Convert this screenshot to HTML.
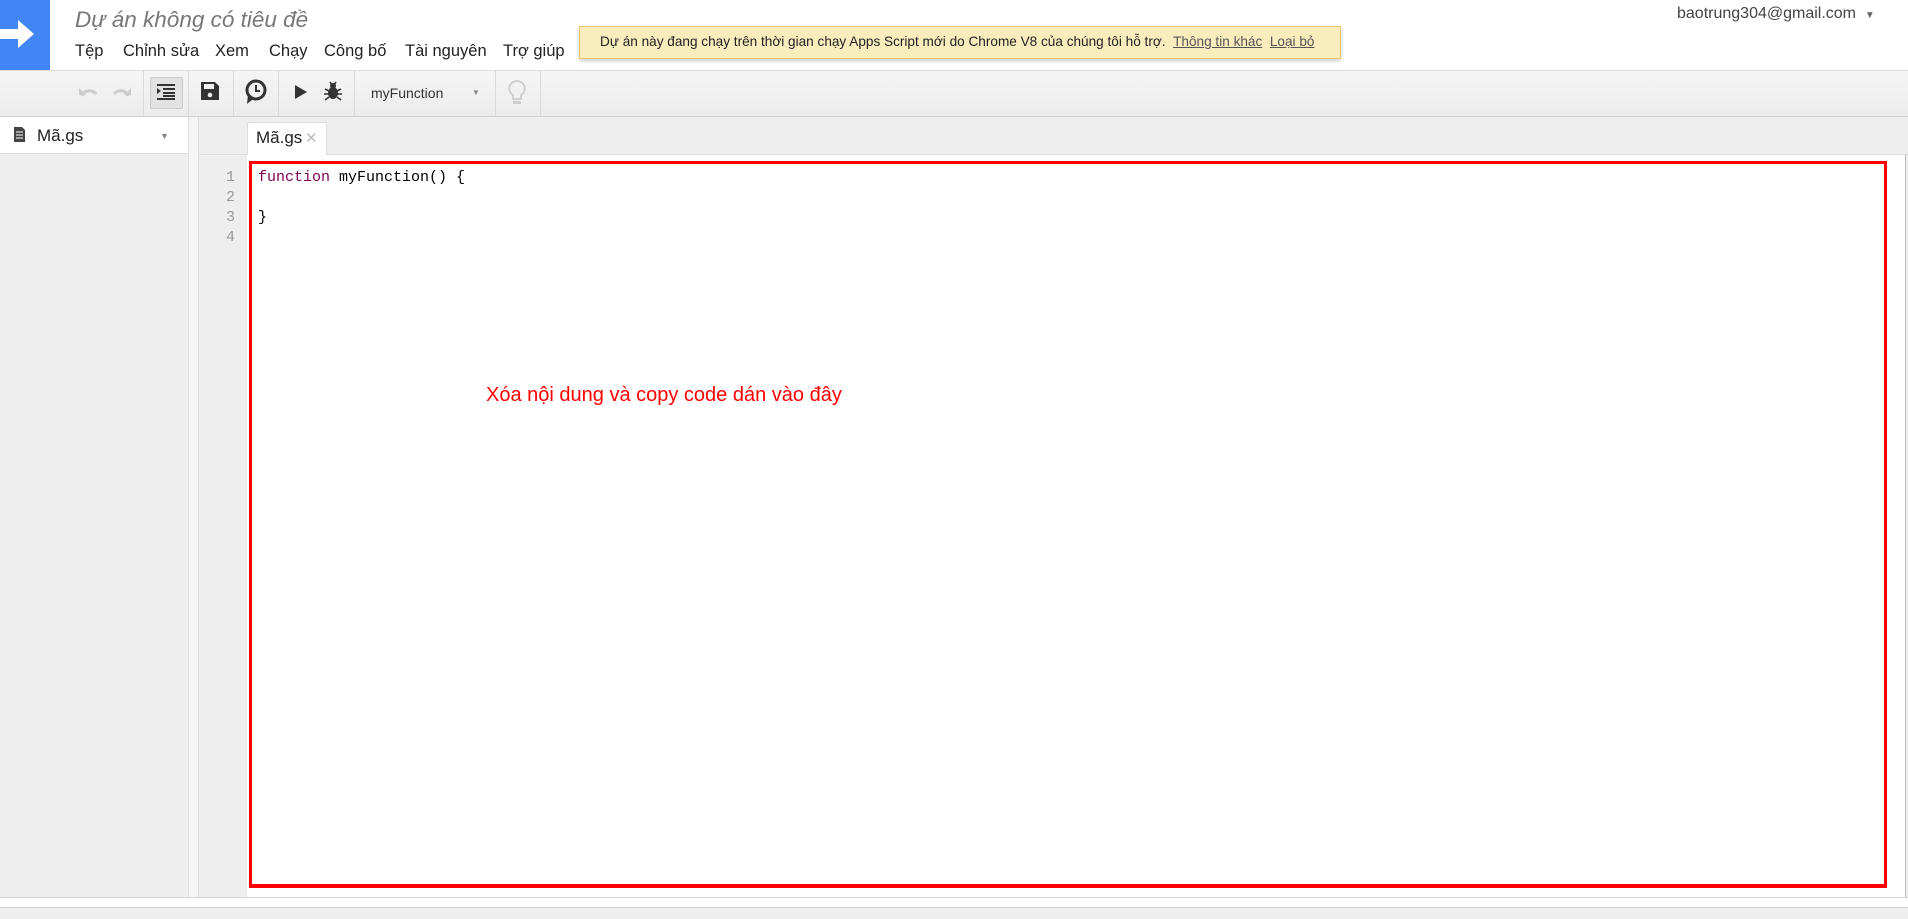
<!DOCTYPE html>
<html><head><meta charset="utf-8"><style>
*{margin:0;padding:0;box-sizing:border-box}
body{width:1908px;height:919px;overflow:hidden;background:#fff;font-family:"Liberation Sans","Noto Sans CJK SC",sans-serif;position:relative}
.a{position:absolute}
.menu span{position:absolute;top:42px;font-size:16.5px;color:#222}
.sep{position:absolute;top:71px;width:1px;height:45px;background:#d9d9d9}
.code{font-family:"Liberation Mono","DejaVu Sans Mono",monospace;font-size:15px;line-height:20px}
</style></head><body>
<div class="a" style="left:0;top:0;width:50px;height:70px;background:#4285f4"></div>
<svg class="a" style="left:0;top:16px" width="40" height="36" viewBox="0 0 40 36"><path d="M0 13h18V4l16 14-16 14v-9H0z" fill="#fff"/></svg>
<div class="a" style="left:75px;top:7px;font-size:22.5px;font-style:italic;color:#777">Dự án không có tiêu đề</div>
<div class="menu">
<span style="left:75px">Tệp</span><span style="left:123px">Chỉnh sửa</span><span style="left:215px">Xem</span><span style="left:269px">Chạy</span><span style="left:324px">Công bố</span><span style="left:405px">Tài nguyên</span><span style="left:503px">Trợ giúp</span></div>
<div class="a" style="left:579px;top:26px;width:762px;height:33px;background:#f9edbe;border:1px solid #f0c36d;box-shadow:0 2px 4px rgba(0,0,0,.2);font-size:13.6px;color:#222;padding:7px 0 0 20px;white-space:nowrap">Dự án này đang chạy trên thời gian chạy Apps Script mới do Chrome V8 của chúng tôi hỗ trợ. &nbsp;<u style="color:#555">Thông tin khác</u>&nbsp; <u style="color:#555">Loại bỏ</u></div>
<div class="a" style="left:1677px;top:5px;font-size:16px;color:#444">baotrung304@gmail.com &nbsp;<span style="font-size:10px;color:#666">▼</span></div>
<!-- toolbar -->
<div class="a" style="left:0;top:70px;width:1908px;height:47px;background:linear-gradient(#f5f5f5,#ececec);border-top:1px solid #ddd;border-bottom:1px solid #d0d0d0"></div>
<div class="sep" style="left:143px"></div><div class="sep" style="left:188px"></div><div class="sep" style="left:233px"></div><div class="sep" style="left:278px"></div><div class="sep" style="left:354px"></div><div class="sep" style="left:495px"></div><div class="sep" style="left:540px"></div>
<svg class="a" style="left:78px;top:84px" width="54" height="16"><path d="M4 12c2-6 10-7 14-2" stroke="#ccc" stroke-width="3" fill="none"/><path d="M1 4v7h7z" fill="#ccc"/><path d="M50 12c-2-6-10-7-14-2" stroke="#ccc" stroke-width="3" fill="none"/><path d="M53 4v7h-7z" fill="#ccc"/></svg>
<div class="a" style="left:150px;top:77px;width:33px;height:32px;background:#e2e2e2;border:1px solid #ccc;border-radius:2px"></div>
<svg class="a" style="left:157px;top:84px" width="18" height="16"><g fill="#333"><rect x="0" y="0" width="18" height="2"/><rect x="6" y="4" width="12" height="2"/><rect x="6" y="8" width="12" height="2"/><rect x="0" y="14" width="18" height="2"/><rect x="6" y="11" width="12" height="2"/><path d="M0 4l4 3-4 3z"/></g></svg>
<svg class="a" style="left:201px;top:82px" width="18" height="18"><path d="M0 0h14l4 4v14H0z" fill="#333"/><rect x="3" y="2" width="10" height="5" fill="#eee"/><circle cx="9" cy="13" r="2.3" fill="#eee"/></svg>
<svg class="a" style="left:244px;top:79px" width="24" height="26"><circle cx="12" cy="11" r="9" stroke="#333" stroke-width="3" fill="none"/><path d="M12 6v6h4" stroke="#333" stroke-width="2" fill="none"/><path d="M4 16l-1 9 6-5z" fill="#333"/></svg>
<svg class="a" style="left:294px;top:84px" width="14" height="16"><path d="M1 1l12 7-12 7z" fill="#333"/></svg>
<svg class="a" style="left:323px;top:81px" width="20" height="20"><ellipse cx="10" cy="12" rx="5" ry="6" fill="#333"/><circle cx="10" cy="5" r="3" fill="#333"/><path d="M2 8l4 2M18 8l-4 2M1 13h5M19 13h-5M2 19l4-3M18 19l-4-3M7 1l2 3M13 1l-2 3" stroke="#333" stroke-width="1.6"/></svg>
<div class="a" style="left:371px;top:85px;font-size:14px;color:#333">myFunction</div>
<div class="a" style="left:472px;top:88px;font-size:8px;color:#888">▼</div>
<svg class="a" style="left:507px;top:79px" width="20" height="28"><path d="M10 2a7.5 7.5 0 0 0-4 14v4h8v-4a7.5 7.5 0 0 0-4-14z" stroke="#ccc" stroke-width="1.8" fill="none"/><rect x="6" y="22" width="8" height="3" fill="#ccc"/></svg>
<!-- lower area -->
<div class="a" style="left:0;top:117px;width:1908px;height:780px;background:#eee"></div>
<div class="a" style="left:0;top:117px;width:188px;height:37px;background:#fff;border-bottom:1px solid #ddd"></div>
<div class="a" style="left:188px;top:117px;width:1px;height:780px;background:#ddd"></div>
<div class="a" style="left:189px;top:117px;width:10px;height:780px;background:#f5f5f5;border-right:1px solid #ddd"></div>
<svg class="a" style="left:14px;top:127px" width="11" height="15"><path d="M0 0h8l3 3v12H0z" fill="#444"/><path d="M2 5h7M2 8h7M2 11h7" stroke="#fff" stroke-width="1"/></svg>
<div class="a" style="left:37px;top:126px;font-size:17px;color:#222">Mã.gs</div>
<div class="a" style="left:160px;top:131px;font-size:9px;color:#888">▼</div>
<div class="a" style="left:199px;top:154px;width:1709px;height:1px;background:#ddd"></div>
<div class="a" style="left:247px;top:122px;width:80px;height:33px;background:#fff;border:1px solid #ddd;border-bottom:none;border-radius:2px 2px 0 0"></div>
<div class="a" style="left:256px;top:128px;font-size:17px;color:#222">Mã.gs</div>
<div class="a" style="left:305px;top:129px;font-size:15px;color:#bbb">✕</div>
<div class="a" style="left:247px;top:155px;width:1658px;height:742px;background:#fff"></div>
<div class="a" style="left:1905px;top:155px;width:1px;height:742px;background:#bbb"></div>
<div class="a code" style="left:205px;top:168px;width:30px;text-align:right;color:#999">1<br>2<br>3<br>4</div>
<div class="a code" style="left:258px;top:168px;color:#000"><span style="color:#7f0055">function</span> myFunction() {<br><br>}</div>
<div class="a" style="left:249px;top:161px;width:1638px;height:727px;border:3px solid #f00;border-bottom-width:4px"></div>
<div class="a" style="left:486px;top:384px;font-size:20px;color:#f00">Xóa nội dung và copy code dán vào đây</div>
<div class="a" style="left:0;top:897px;width:1908px;height:11px;background:#fff;border-top:1px solid #d5d5d5;border-bottom:1px solid #d5d5d5"></div>
<div class="a" style="left:0;top:908px;width:1908px;height:11px;background:#eee"></div>
</body></html>
